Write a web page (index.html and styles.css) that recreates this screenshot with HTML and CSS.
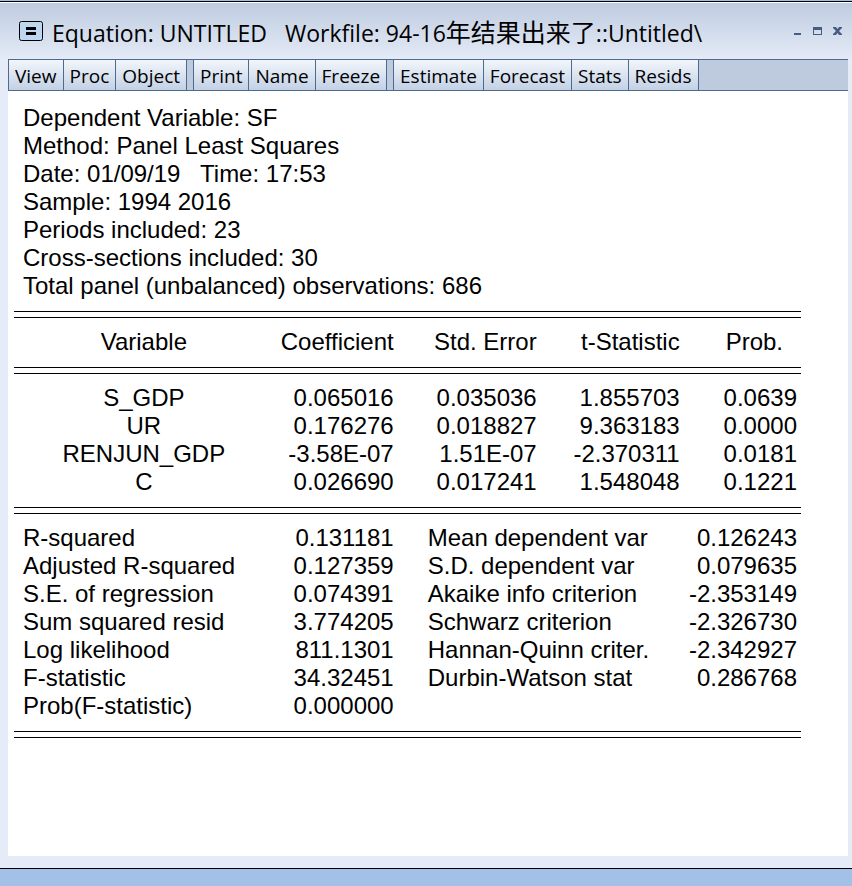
FILE: index.html
```html
<!DOCTYPE html>
<html lang="en">
<head>
    <meta charset="UTF-8">
    <meta name="viewport" content="width=device-width, initial-scale=1.0">
    <title>Equation: UNTITLED</title>
    <link rel="stylesheet" href="styles.css">
</head>
<body>
    <div class="window">
        <header class="titlebar">
            <svg class="app-icon" width="24" height="20" viewBox="0 0 24 20">
                <rect x="0.5" y="0.5" width="23" height="19" rx="2" fill="#bdd7f1" stroke="#000"/>
                <path d="M7 6h10v3H7zM7 11h10v3H7z" fill="#000"/>
            </svg>
            <h1>Equation: UNTITLED <span class="workfile">Workfile: 94-16<span class="cjk" lang="zh">年结果出来了</span>::Untitled\</span></h1>
            <div class="controls">
                <button aria-label="Minimize"><svg width="10" height="10" viewBox="0 0 10 10"><path d="M1 7h7v2H1z"/></svg></button>
                <button aria-label="Maximize"><svg width="10" height="10" viewBox="0 0 10 10"><path fill-rule="evenodd" d="M0 1h9v8H0zM1 4v4h7V4z"/></svg></button>
                <button aria-label="Close"><svg width="10" height="10" viewBox="0 0 10 10"><path d="M0 1h3l1.500 2L6 1h3v1L6 5l3 3v1H6L4.500 7 3 9H0V8l3-3-3-3z"/></svg></button>
            </div>
        </header>
        <nav class="toolbar">
            <div class="group">
                <button>View</button>
                <button>Proc</button>
                <button>Object</button>
            </div>
            <div class="group">
                <button>Print</button>
                <button>Name</button>
                <button>Freeze</button>
            </div>
            <div class="group">
                <button>Estimate</button>
                <button>Forecast</button>
                <button>Stats</button>
                <button>Resids</button>
            </div>
        </nav>
        <main class="sheet">
            <div class="summary">
                <p>Dependent Variable: SF</p>
                <p>Method: Panel Least Squares</p>
                <p>Date: 01/09/19 &nbsp; Time: 17:53</p>
                <p>Sample: 1994 2016</p>
                <p>Periods included: 23</p>
                <p>Cross-sections included: 30</p>
                <p>Total panel (unbalanced) observations: 686</p>
            </div>
            <hr>
            <table class="coefficients">
                <colgroup>
                    <col class="name">
                    <col class="coef">
                    <col class="stat">
                    <col class="stat">
                    <col class="prob">
                </colgroup>
                <thead>
                    <tr><th>Variable</th><th>Coefficient</th><th>Std. Error</th><th>t-Statistic</th><th>Prob.</th></tr>
                    <tr><td class="line" colspan="5"><hr></td></tr>
                </thead>
                <tbody>
                    <tr><td>S_GDP</td><td>0.065016</td><td>0.035036</td><td>1.855703</td><td>0.0639</td></tr>
                    <tr><td>UR</td><td>0.176276</td><td>0.018827</td><td>9.363183</td><td>0.0000</td></tr>
                    <tr><td>RENJUN_GDP</td><td>-3.58E-07</td><td>1.51E-07</td><td>-2.370311</td><td>0.0181</td></tr>
                    <tr><td>C</td><td>0.026690</td><td>0.017241</td><td>1.548048</td><td>0.1221</td></tr>
                </tbody>
            </table>
            <hr>
            <table class="statistics">
                <colgroup>
                    <col class="name">
                    <col class="coef">
                    <col class="label">
                    <col class="prob">
                </colgroup>
                <tbody>
                    <tr><td>R-squared</td><td>0.131181</td><td>Mean dependent var</td><td>0.126243</td></tr>
                    <tr><td>Adjusted R-squared</td><td>0.127359</td><td>S.D. dependent var</td><td>0.079635</td></tr>
                    <tr><td>S.E. of regression</td><td>0.074391</td><td>Akaike info criterion</td><td>-2.353149</td></tr>
                    <tr><td>Sum squared resid</td><td>3.774205</td><td>Schwarz criterion</td><td>-2.326730</td></tr>
                    <tr><td>Log likelihood</td><td>811.1301</td><td>Hannan-Quinn criter.</td><td>-2.342927</td></tr>
                    <tr><td>F-statistic</td><td>34.32451</td><td>Durbin-Watson stat</td><td>0.286768</td></tr>
                    <tr><td>Prob(F-statistic)</td><td>0.000000</td><td></td><td></td></tr>
                </tbody>
            </table>
            <hr>
        </main>
    </div>
</body>
</html>
```
FILE: styles.css
```css
* {
    box-sizing: border-box;
}
body {
    margin: 0;
    min-height: 100vh;
    padding: 1px 0 17px;
    display: flex;
    flex-direction: column;
    background: #a3c1e8;
    color: #000;
    font-family: "Liberation Sans", Arial, sans-serif;
    font-size: 24px;
    line-height: 28px;
}
.window {
    flex: 1;
    display: flex;
    flex-direction: column;
    padding: 0 4px 12px 8px;
    border-top: 1px solid #000;
    border-bottom: 1px solid #000;
    background: linear-gradient(#fff 1px, #becce0 1px, #e5ebf7 58px);
}
.titlebar {
    display: flex;
    align-items: center;
    height: 57px;
    padding: 0 5px 0 11px;
}
.app-icon {
    margin-right: 9px;
}
h1 {
    flex: 1;
    margin: 0;
    padding-top: 4px;
    font-family: "Open Sans", "Noto Sans CJK SC", sans-serif;
    font-size: 23px;
    font-weight: 400;
    white-space: nowrap;
}
.workfile {
    margin-left: 12px;
}
.cjk {
    font-size: 25px;
}
.controls {
    display: flex;
    gap: 10px;
}
.controls button {
    display: flex;
    padding: 0;
    border: 0;
    background: none;
    fill: #475c82;
}
.toolbar {
    display: flex;
    gap: 6px;
    height: 32px;
    border: solid #4d6b8e;
    border-width: 1px 0;
    background: #becbde;
}
.group {
    display: flex;
    border-left: 1px solid #4d6b8e;
}
.group button {
    padding: 2px 6px 0;
    border: 0;
    border-right: 1px solid #4d6b8e;
    background: linear-gradient(#f2f6fb, #c3d1e5);
    color: #000;
    font-family: "Open Sans", sans-serif;
    font-size: 19px;
}
.sheet {
    flex: 1;
    padding: 13px 47px 13px 6px;
    background: #fff;
}
.summary {
    padding-left: 9px;
}
.summary p {
    margin: 0;
}
hr {
    height: 7px;
    margin: 11px 0 10px;
    border: solid #000;
    border-width: 1px 0;
}
table {
    width: 100%;
    table-layout: fixed;
    border-collapse: collapse;
}
th,
td {
    height: 28px;
    padding: 0 7px 0 0;
    font-weight: 400;
    text-align: right;
    white-space: nowrap;
}
.name {
    width: 33%;
}
.coef {
    width: 127px;
}
.stat {
    width: 143px;
}
.coefficients th:first-child,
.coefficients tbody td:first-child {
    padding: 0;
    text-align: center;
}
.coefficients th:last-child {
    padding-right: 18px;
}
td:last-child {
    padding-right: 4px;
}
.coefficients .line {
    padding: 0;
}
.statistics .prob {
    width: 130px;
}
.statistics td:first-child {
    padding-left: 9px;
    text-align: left;
}
.statistics td:nth-child(3) {
    padding-left: 27px;
    text-align: left;
}
```
